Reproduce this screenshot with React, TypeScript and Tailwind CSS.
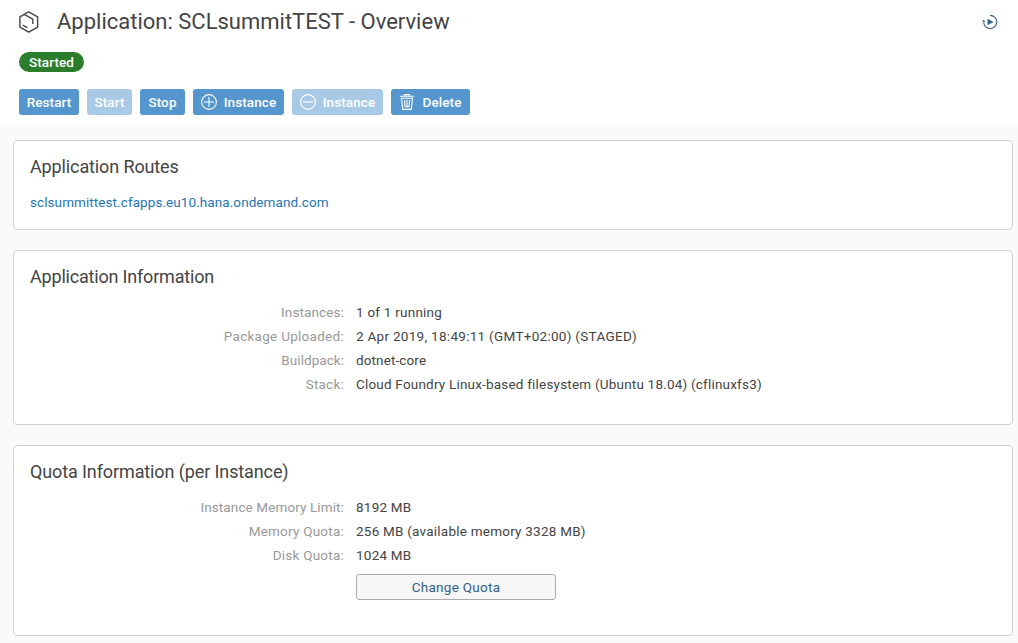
import React from "react";
import type { ReactNode } from "react";

function HexIcon() {
  return (
    <svg width="20" height="22" viewBox="0 0 20 22" fill="none" stroke="#444" strokeWidth="1.4" strokeLinejoin="round" strokeLinecap="round">
      <path d="M6.2 2.6 L9.6 0.9 L18.6 5.8 V16.2 L9.8 21.2 L0.9 16.2 V5.8 L5.2 3.4 L13.8 8.2 V12.4" />
      <path d="M4.2 14.3 L7.8 16.4" />
    </svg>
  );
}

function AutoRefreshIcon() {
  return (
    <svg width="16" height="16" viewBox="0 0 16 16" fill="none" stroke="#346187" strokeWidth="1.1">
      <path d="M8 1.4 A6.6 6.6 0 1 1 1.7 9" />
      <path d="M0 8.2 L1.7 5.8 L3.4 8.2 Z" fill="#346187" stroke="none" />
      <path d="M5.5 4.8 L11.6 8 L5.5 11.2 Z" fill="#346187" stroke="none" />
    </svg>
  );
}

function CircleIcon({ plus = false }: { plus?: boolean }) {
  return (
    <svg width="16" height="16" viewBox="0 0 16 16" fill="none" stroke="white" strokeWidth="1.1">
      <circle cx="8" cy="8" r="7.4" />
      <path d={plus ? "M3 8 H13 M8 3 V13" : "M3 8 H13"} />
    </svg>
  );
}

function TrashIcon() {
  return (
    <svg width="16" height="16" viewBox="0 0 16 16" fill="none" stroke="white" strokeWidth="1.1">
      <path d="M0.8 2.2 H15.2 M5.5 2 V0.6 H10.5 V2" />
      <path d="M1.8 4.3 H14.2 M2.5 4.3 L3.7 15.4 H12.3 L13.5 4.3" />
      <path d="M5.5 6 L6 12.8 H10 L10.5 6 M8 6 V12.8" />
    </svg>
  );
}

function ActionButton({ children, className }: { children: ReactNode; className: string }) {
  return (
    <button className={`flex h-[26px] items-center justify-center rounded-[3px] text-[13.5px] font-medium text-white ${className}`}>
      {children}
    </button>
  );
}

function Card({ title, className, children }: { title: ReactNode; className: string; children: ReactNode }) {
  return (
    <section className={`rounded-[4px] border border-[#d0d0d0] bg-white px-4 pt-[14px] ${className}`}>
      <h2 className="h-6 text-[18px] leading-6 text-[#444]">{title}</h2>
      {children}
    </section>
  );
}

function Row({ label, value }: { label: ReactNode; value: ReactNode }) {
  return (
    <div className="flex h-6 gap-3 leading-6">
      <dt className="flex w-[314px] shrink-0 justify-end whitespace-nowrap text-[#999]">{label}</dt>
      <dd className="whitespace-nowrap text-[#444]">{value}</dd>
    </div>
  );
}

export default function App() {
  return (
    <div className="h-[643px] w-[1018px] overflow-hidden bg-[#fafafa] font-['Roboto',sans-serif] text-[13.5px] tracking-[0.23px]">
      <header className="flex h-[126px] flex-col bg-white pl-[19px]">
        <div className="flex h-11 items-center justify-between pr-[20px]">
          <div className="flex items-center gap-[18px]">
            <HexIcon />
            <h1 className="pb-[2px] text-[22px] tracking-normal text-[#444]">Application: SCLsummitTEST - Overview</h1>
          </div>
          <AutoRefreshIcon />
        </div>
        <div className="mt-2 flex h-5 w-[65px] items-center justify-center rounded-full bg-[#2b7c2b] font-medium tracking-[0.1px] text-white">Started</div>
        <div className="mt-[17px] flex gap-2 tracking-[0.1px]">
          <ActionButton className="w-[60px] bg-[#5496cd]">Restart</ActionButton>
          <ActionButton className="w-[45px] bg-[#a9cae6]">Start</ActionButton>
          <ActionButton className="w-[45px] bg-[#5496cd]">Stop</ActionButton>
          <ActionButton className="w-[91px] gap-[7px] bg-[#5496cd]"><CircleIcon plus /><span>Instance</span></ActionButton>
          <ActionButton className="w-[91px] gap-[7px] bg-[#a9cae6]"><CircleIcon /><span>Instance</span></ActionButton>
          <ActionButton className="w-[79px] gap-[7px] bg-[#5496cd]"><TrashIcon /><span>Delete</span></ActionButton>
        </div>
      </header>
      <main className="flex flex-col gap-5 pl-[13px] pr-[5px] pt-[14px]">
        <Card title={<span className="tracking-[-0.12px]">Application Routes</span>} className="h-[90px]">
          <a className="mt-[11px] block leading-6 tracking-[0.08px] text-[#1f76b0]">sclsummittest.cfapps.eu10.hana.ondemand.com</a>
        </Card>
        <Card title={<span className="tracking-[-0.19px]">Application Information</span>} className="h-[175px]">
          <dl className="mt-[11px]">
            <Row label={<span className="tracking-[0.12px]">Instances:</span>} value="1 of 1 running" />
            <Row label={<span className="tracking-[0.28px]">Package Uploaded:</span>} value={<span className="tracking-[0.29px]">2 Apr 2019, 18:49:11 (GMT+02:00) (STAGED)</span>} />
            <Row label={<span className="tracking-[0.05px]">Buildpack:</span>} value={<span className="tracking-[0.12px]">dotnet-core</span>} />
            <Row label="Stack:" value={<span className="tracking-[0.2px]">Cloud Foundry Linux-based filesystem (Ubuntu 18.04) (cflinuxfs3)</span>} />
          </dl>
        </Card>
        <Card title={<span className="tracking-[-0.11px]">Quota Information (per Instance)</span>} className="h-[191px]">
          <dl className="mt-[11px]">
            <Row label={<span className="tracking-[0.11px]">Instance Memory Limit:</span>} value="8192 MB" />
            <Row label="Memory Quota:" value="256 MB (available memory 3328 MB)" />
            <Row label="Disk Quota:" value="1024 MB" />
          </dl>
          <button className="ml-[326px] mt-[7px] flex h-[26px] w-[200px] items-center justify-center rounded-[3px] border border-[#aaa] bg-[#f6f6f6] tracking-[0.28px] text-[#346187]">Change Quota</button>
        </Card>
      </main>
    </div>
  );
}
